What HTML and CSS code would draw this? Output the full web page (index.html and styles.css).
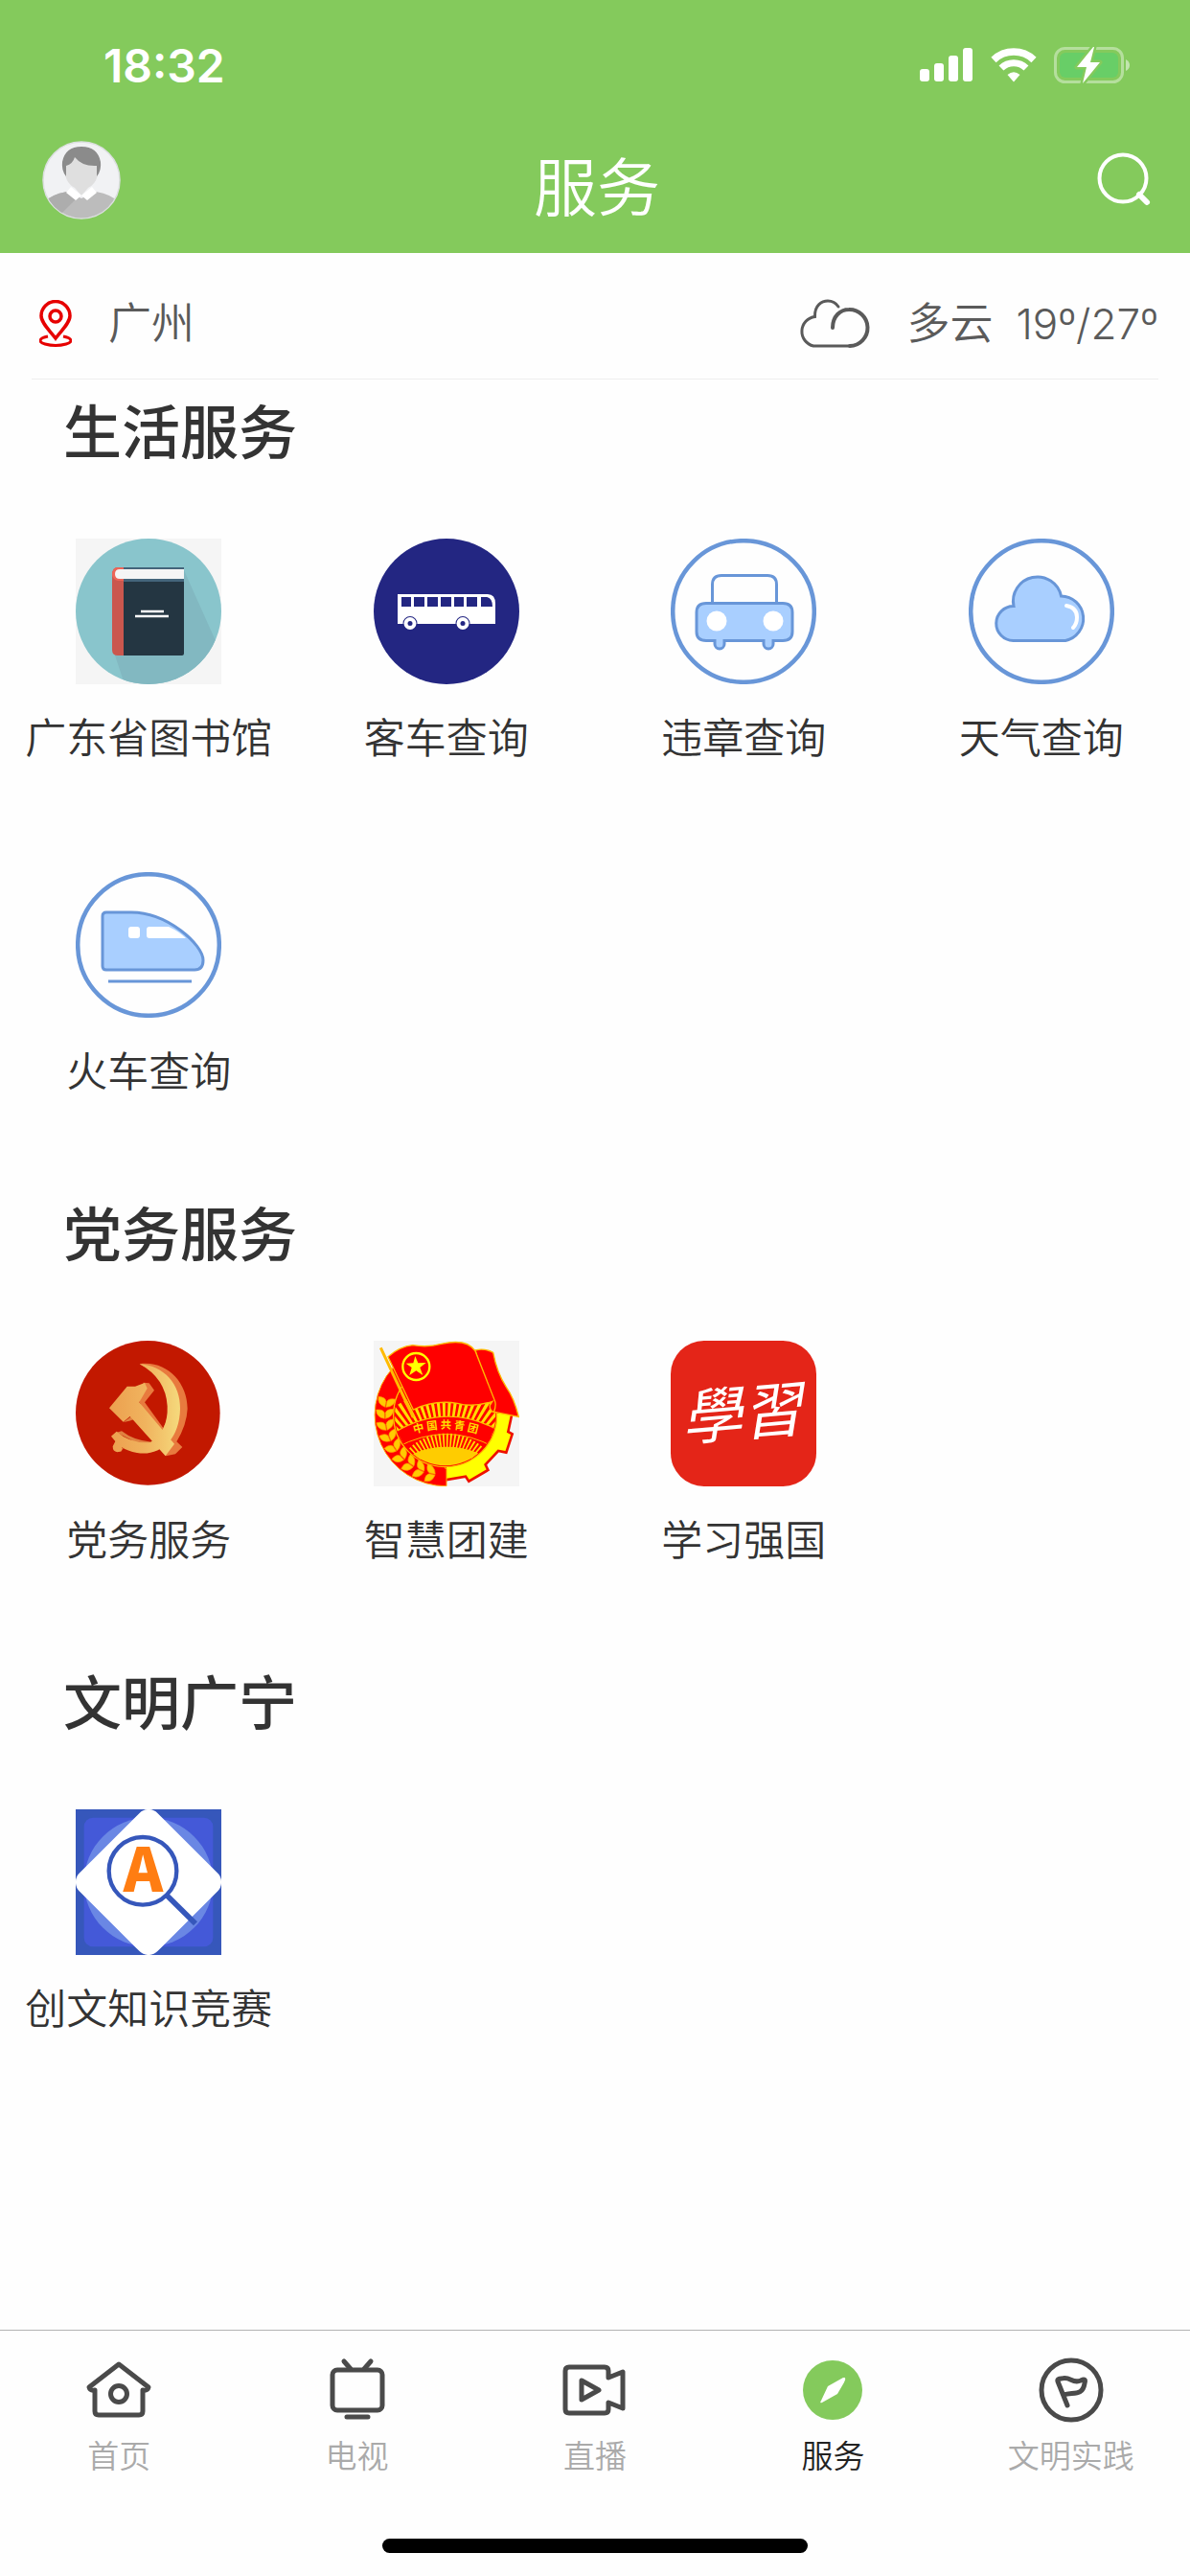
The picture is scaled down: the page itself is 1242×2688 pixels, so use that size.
FILE: index.html
```html
<!DOCTYPE html>
<html lang="zh-CN">
<head>
  <meta charset="UTF-8">
  <meta name="viewport" content="width=device-width, initial-scale=1.0">
  <title>服务</title>
  <link rel="stylesheet" href="styles.css">
</head>
<body>
  <!-- Page header -->
  <header class="header">
    <div class="status-bar">
      <div class="status-time">18:32</div>
      <div class="status-icons">
        <svg width="56" height="36" viewBox="0 0 56 36" fill="#fff">
          <rect x="0" y="22" width="10" height="13" rx="3"/>
          <rect x="15" y="16" width="10" height="19" rx="3"/>
          <rect x="30" y="8" width="10" height="27" rx="3"/>
          <rect x="45" y="0" width="10" height="35" rx="3"/>
        </svg>
        <svg width="48" height="36" viewBox="0 0 48 36" fill="none" stroke="#fff">
          <path d="M3 12.500A30.500 30.500 0 0 1 45 12.500" stroke-width="7.500"/>
          <path d="M11 21A18.500 18.500 0 0 1 37 21" stroke-width="7"/>
          <path d="M17.500 28Q24 22.500 30.500 28L24 35.500Z" fill="#fff" stroke="none"/>
        </svg>
        <svg width="80" height="40" viewBox="0 0 80 40">
          <rect x="1.500" y="2.500" width="70" height="35" rx="10" fill="none" stroke="#fff" stroke-opacity=".4" stroke-width="3"/>
          <rect x="6" y="7" width="61" height="26" rx="6" fill="#68ce67"/>
          <path d="M75 14Q79 16 79 20Q79 24 75 26Z" fill="#fff" fill-opacity=".5"/>
          <path d="M41 1L24 22H34L30 39L48 17H38L42 1Z" fill="#fff" stroke="#84ca5c" stroke-width="5" stroke-linejoin="round" paint-order="stroke"/>
        </svg>
      </div>
    </div>
    <div class="title-bar">
      <button class="avatar-button" aria-label="我的">
        <svg width="82" height="82" viewBox="0 0 82 82">
          <defs><clipPath id="avatar-clip"><circle cx="41" cy="41" r="39.500"/></clipPath></defs>
          <circle cx="41" cy="41" r="40" fill="#f1f2f4" stroke="#dcdfe0" stroke-width="1.500"/>
          <g clip-path="url(#avatar-clip)">
            <path d="M0 82V66Q8 56 26 53L41 60L56 53Q74 56 82 66V82Z" fill="#bcbcbc"/>
            <path d="M0 82V66Q8 56 26 53L36 60L14 82Z" fill="#adadad"/>
            <path d="M24 16H58V36Q55 46 48 49L41 57L34 49Q27 46 24 36Z" fill="#dfdfdf"/>
            <path d="M30 48L41 57L35 62L25 54Z M52 48L41 57L47 62L57 54Z" fill="#fff"/>
            <path d="M25 37Q20 31 21 22Q24 6 41 6Q58 6 61 22Q62 31 57 37V26Q42 27 34 17Q32 24 25 26Z" fill="#8b8b8b"/>
          </g>
        </svg>
      </button>
      <h1 class="title">服务</h1>
      <button class="search-button" aria-label="搜索">
        <svg width="58" height="58" viewBox="0 0 58 58" fill="none" stroke="#fff" stroke-linecap="round">
          <circle cx="28" cy="27" r="24.500" stroke-width="4"/>
          <path d="M45 44L53 52" stroke-width="6"/>
        </svg>
      </button>
    </div>
  </header>

  <main class="content">
    <!-- City and weather -->
    <div class="weather-bar">
      <a href="#" class="city">
        <svg width="34" height="50" viewBox="0 0 34 50" fill="none" stroke="#e60000" stroke-width="3.500">
          <path d="M17 40C11 32 2 24 2 16.500A15 15 0 0 1 32 16.500C32 24 23 32 17 40Z"/>
          <circle cx="17" cy="17" r="6"/>
          <path d="M9 38C-1 40 -1 44 6 46Q17 49 28 46C35 44 35 40 25 38" stroke-width="3"/>
        </svg>
        <span>广州</span>
      </a>
      <div class="weather">
        <svg width="76" height="52" viewBox="0 0 76 52" fill="none" stroke="#5a5a5a" stroke-width="3" stroke-linecap="round">
          <path d="M55 49H17A15.500 15.500 0 0 1 18.500 18.500C18 6 26 2 32 2Q39 2 43 8"/>
          <path d="M37 30C37 18 45 11 54 11A19 19 0 0 1 55 49" stroke-width="4"/>
        </svg>
        <span>多云</span>
        <span class="temperature">19º/27º</span>
      </div>
    </div>

    <section class="service-section">
      <h2 class="section-title">生活服务</h2>
      <div class="service-grid">
        <a href="#" class="service">
          <svg class="service-icon" viewBox="0 0 152 152">
            <defs><clipPath id="book-clip"><circle cx="76" cy="76" r="76"/></clipPath></defs>
            <rect width="152" height="152" fill="#f5f5f5"/>
            <circle cx="76" cy="76" r="76" fill="#89c5cc"/>
            <path d="M113 33L152 120V152H51L41 122H113Z" fill="#82b8c1" clip-path="url(#book-clip)"/>
            <rect x="48" y="30" width="65" height="92" rx="2" fill="#243642"/>
            <path d="M50 30H113V45H50Z" fill="#44657b"/>
            <path d="M50 30H44Q38 30 38 38V116Q38 122 44 122H50Z" fill="#ca574e"/>
            <path d="M50 30H44Q38 30 38 38Q39 43 44 44H50Z" fill="#ec6558"/>
            <path d="M113 32H46Q41 32 41 37Q41 42 46 42H113Z" fill="#f5f5f5"/>
            <path d="M68 76H92M62 81H97" stroke="#fff" stroke-width="2.500"/>
          </svg>
          <span class="service-name">广东省图书馆</span>
        </a>
        <a href="#" class="service">
          <svg class="service-icon" viewBox="0 0 152 152">
            <circle cx="76" cy="76" r="76" fill="#232682"/>
            <path d="M25 58H119Q127 58 127 68V89H25Z" fill="#fff"/>
            <path d="M29 61H39V71H29Z M42 61H53V71H42Z M56 61H67V71H56Z M70 61H81V71H70Z M84 61H94V71H84Z M97 61H108V71H97Z M112 61H118Q124 62 124 71H112Z" fill="#232682"/>
            <g fill="#fff" stroke="#232682">
              <circle cx="38" cy="88.500" r="6.500" stroke-width="2" paint-order="stroke"/>
              <circle cx="93" cy="88.500" r="6.500" stroke-width="2" paint-order="stroke"/>
            </g>
            <circle cx="38" cy="88.500" r="2.500" fill="#232682"/>
            <circle cx="93" cy="88.500" r="2.500" fill="#232682"/>
          </svg>
          <span class="service-name">客车查询</span>
        </a>
        <a href="#" class="service">
          <svg class="service-icon" viewBox="0 0 152 152" fill="none" stroke="#6896d8" stroke-width="3">
            <circle cx="76" cy="76" r="73.800" stroke-width="4.500"/>
            <path d="M43.500 67V48Q43.500 38.500 53 38.500H101Q110.500 38.500 110.500 48V67"/>
            <path d="M37 67.500H117Q127 67.500 127 77V97Q127 106.500 117 106.500H107V110A5 5 0 0 1 97 110V106.500H56V110A5 5 0 0 1 46 110V106.500H37Q27 106.500 27 97V77Q27 67.500 37 67.500Z" fill="#a9cfff"/>
            <circle cx="48" cy="86" r="10.500" fill="#fff" stroke="none"/>
            <circle cx="107" cy="86" r="10.500" fill="#fff" stroke="none"/>
          </svg>
          <span class="service-name">违章查询</span>
        </a>
        <a href="#" class="service">
          <svg class="service-icon" viewBox="0 0 152 152" fill="none" stroke="#6896d8" stroke-width="3">
            <circle cx="76" cy="76" r="73.800" stroke-width="4.500"/>
            <path d="M46.500 106.500A18 18 0 0 1 47 70.500A25 25 0 0 1 96.500 60A23.500 23.500 0 0 1 101 106.500Z" fill="#a9cfff"/>
            <path d="M102 70Q113 72 113 82Q113 89 109 93" stroke="#fff" stroke-width="4" stroke-linecap="round"/>
          </svg>
          <span class="service-name">天气查询</span>
        </a>
        <a href="#" class="service">
          <svg class="service-icon" viewBox="0 0 152 152" fill="none" stroke="#6896d8" stroke-width="3">
            <circle cx="76" cy="76" r="73.800" stroke-width="4.500"/>
            <path d="M32 42H58C96 42 133 76 133 92Q133 102 124 102H32Q28 102 28 98V46Q28 42 32 42Z" fill="#a9cfff"/>
            <rect x="55" y="57" width="12" height="12" rx="3" fill="#fff" stroke="none"/>
            <path d="M77 57H97Q108 62 115 69H77Q74 69 74 66V60Q74 57 77 57Z" fill="#fff" stroke="none"/>
            <path d="M34 114H121"/>
          </svg>
          <span class="service-name">火车查询</span>
        </a>
      </div>
    </section>

    <section class="service-section">
      <h2 class="section-title">党务服务</h2>
      <div class="service-grid">
        <a href="#" class="service">
          <svg class="service-icon" viewBox="118 57 456 456">
            <defs>
              <linearGradient id="gold" gradientUnits="userSpaceOnUse" x1="225" y1="0" x2="445" y2="0">
                <stop offset="0" stop-color="#eca04f"/>
                <stop offset=".5" stop-color="#f0b35e"/>
                <stop offset="1" stop-color="#f5d97c"/>
              </linearGradient>
            </defs>
            <circle cx="344" cy="283" r="226" fill="#c21800"/>
            <path d="M318 130C400 118 468 185 468 270Q466 320 434 373L452 390L430 412L400 418Q370 350 318 250L330 188L348 190L364 212L334 250L392 330Q415 290 407 230Q395 170 318 130Z" fill="#e87a3e"/>
            <path d="M268 312L292 294L310 300L286 308Z M236 386Q240 406 260 404L268 392Z M246 344L262 340Q300 370 356 374L340 392Z" fill="#e08040"/>
            <g fill="url(#gold)">
              <path d="M318 130C395 135 447 195 445 270C443 370 380 420 310 408Q280 402 262 390Q266 404 248 406Q234 404 234 388L242 372L229 356L246 341Q290 380 352 375Q408 340 405 262Q400 175 318 130Z"/>
              <path d="M223 268L279 200H304L334 189L342 206L317 250L427 380L399 418L288 294L267 311Z"/>
            </g>
          </svg>
          <span class="service-name">党务服务</span>
        </a>
        <a href="#" class="service">
          <svg class="service-icon" viewBox="0 0 456 456">
            <defs>
              <clipPath id="league-disc"><circle cx="224" cy="233" r="158"/></clipPath>
              <g id="wheat" fill="#fc0" stroke="#f90" stroke-width="2">
                <path d="M34 244Q8 240 8 216Q30 214 34 226Z"/>
                <path d="M37 244Q62 238 62 214Q40 214 37 226Z"/>
              </g>
              <path id="league-arc" d="M92 303Q224 248 360 303"/>
            </defs>
            <rect width="456" height="456" fill="#f5f5f5"/>
            <!-- gear -->
            <path d="M434 225L421 285L434 292L415 350L390 345L350 388L358 405L298 440L288 425L224 436V220Z" fill="#ff0" stroke="#e10" stroke-width="8"/>
            <path d="M228 455A222 222 0 0 1 60 85L224 60V400H228Z" fill="#f00" stroke="#fa0" stroke-width="3"/>
            <!-- wheat -->
            <use href="#wheat" transform="rotate(11 224 233)"/>
            <use href="#wheat"/>
            <use href="#wheat" transform="rotate(-11 224 233)"/>
            <use href="#wheat" transform="rotate(-22 224 233)"/>
            <use href="#wheat" transform="rotate(-33 224 233)"/>
            <use href="#wheat" transform="rotate(-44 224 233)"/>
            <use href="#wheat" transform="rotate(-55 224 233)"/>
            <use href="#wheat" transform="rotate(-66 224 233)"/>
            <use href="#wheat" transform="rotate(-77 224 233)"/>
            <!-- disc with rays and rising sun -->
            <circle cx="224" cy="233" r="162" fill="#f00" stroke="#fb0" stroke-width="4"/>
            <g clip-path="url(#league-disc)">
              <circle cx="224" cy="420" r="215" fill="none" stroke="#fd0" stroke-width="100" stroke-dasharray="9 8"/>
              <path d="M60 290Q224 190 390 280V400H60Z" fill="#f00" stroke="#fb0" stroke-width="4"/>
              <circle cx="228" cy="460" r="145" fill="none" stroke="#fd0" stroke-width="50" stroke-dasharray="5 6"/>
              <path d="M70 335Q229 250 380 335" fill="none" stroke="#fb0" stroke-width="3"/>
              <ellipse cx="228" cy="390" rx="130" ry="58" fill="#fc0"/>
            </g>
            <text class="league-text"><textPath href="#league-arc" startOffset="50%" text-anchor="middle">中 国 共 青 团</textPath></text>
            <!-- flag -->
            <path d="M22 22L124 240" stroke="#fb0" stroke-width="9"/>
            <path d="M318 30Q345 22 374 37Q386 100 415 145Q440 180 454 238L372 222Z" fill="#f00" stroke="#fb0" stroke-width="4"/>
            <path d="M45 50Q82 18 122 14Q170 22 212 10C265 -2 300 5 318 32L380 190Q384 205 376 224Q362 218 364 202L372 190Q310 210 262 196Q190 184 124 216Z" fill="#f00" stroke="#fb0" stroke-width="4"/>
            <circle cx="133" cy="81" r="42" fill="none" stroke="#ff0" stroke-width="7"/>
            <path d="M130 48L139 70L164 69L145 84L154 108L133 94L112 108L119 84L101 71L124 70Z" fill="#ff0"/>
          </svg>
          <span class="service-name">智慧团建</span>
        </a>
        <a href="#" class="service">
          <svg class="service-icon" viewBox="0 0 456 456">
            <rect width="456" height="456" rx="104" fill="#e42518"/>
            <text class="study-text" x="222" y="296" text-anchor="middle" transform="rotate(-5 228 228)">學習</text>
          </svg>
          <span class="service-name">学习强国</span>
        </a>
      </div>
    </section>

    <section class="service-section">
      <h2 class="section-title">文明广宁</h2>
      <div class="service-grid">
        <a href="#" class="service">
          <svg class="service-icon" viewBox="0 0 456 456">
            <rect width="456" height="456" fill="#3657bb"/>
            <rect x="26" y="26" width="404" height="404" rx="28" fill="#4459d8"/>
            <circle cx="228" cy="228" r="202" fill="#6a87e4"/>
            <rect x="55" y="55" width="346" height="346" rx="40" transform="rotate(45 228 228)" fill="#fff"/>
            <g fill="none" stroke="#3657bb">
              <circle cx="210" cy="193" r="106" stroke-width="13"/>
              <path d="M286 270L375 358" stroke-width="17"/>
            </g>
            <text class="quiz-text" x="211" y="259" text-anchor="middle">A</text>
          </svg>
          <span class="service-name">创文知识竞赛</span>
        </a>
      </div>
    </section>
  </main>

  <!-- Bottom tabs -->
  <footer class="footer">
    <nav class="tabs">
      <a href="#" class="tab">
        <svg class="tab-icon" viewBox="0 0 70 70">
          <path d="M4 32L35 8L66 32Q65 36 60 35V57Q60 61 56 61H14Q10 61 10 57V35Q5 36 4 32Z"/>
          <circle cx="35" cy="39" r="8.500"/>
        </svg>
        <span>首页</span>
      </a>
      <a href="#" class="tab">
        <svg class="tab-icon" viewBox="0 0 70 70">
          <rect x="9" y="14" width="52" height="42" rx="5"/>
          <path d="M21 5L28 13M49 5L42 13M24 63H46"/>
        </svg>
        <span>电视</span>
      </a>
      <a href="#" class="tab">
        <svg class="tab-icon" viewBox="0 0 70 70">
          <path d="M8 11H45Q49 11 49 15V22L64 16V54L49 48V55Q49 59 45 59H8Q4 59 4 55V15Q4 11 8 11Z"/>
          <path d="M21 25V45L39 35Z"/>
        </svg>
        <span>直播</span>
      </a>
      <a href="#" class="tab active" aria-current="page">
        <svg class="tab-icon" viewBox="0 0 70 70">
          <circle class="compass" cx="35" cy="35" r="31"/>
          <path class="needle" d="M48 22Q49 24 47 27L40 39L24 48Q21 49 23 46L30 31L46 22Z"/>
        </svg>
        <span>服务</span>
      </a>
      <a href="#" class="tab">
        <svg class="tab-icon" viewBox="0 0 70 70">
          <circle cx="35" cy="35" r="31"/>
          <path d="M31 51L21 26Q20 23 25 23C34 20 36 29 45 25Q51 22 49 28C47 41 38 37 27 40"/>
        </svg>
        <span>文明实践</span>
      </a>
    </nav>
    <div class="home-indicator"></div>
  </footer>
</body>
</html>
```
FILE: styles.css
```css
* {
  box-sizing: border-box;
}

body {
  display: flex;
  flex-direction: column;
  min-height: 100vh;
  margin: 0;
  font-family: Inter, "Noto Sans CJK SC", sans-serif;
  font-weight: 350;
  color: #333;
  background-color: #fefefe;
}

a {
  color: inherit;
  text-decoration: none;
}

button {
  display: flex;
  padding: 0;
  border: none;
  background: none;
  cursor: pointer;
}

svg {
  display: block;
  flex-shrink: 0;
}

/* Header styles */
.header {
  color: #fff;
  background-color: #84ca5c;
}

.status-bar {
  display: flex;
  justify-content: space-between;
  align-items: center;
  height: 136px;
  padding: 0 62px 0 108px;
}

.status-time {
  font-size: 48px;
  font-weight: 600;
}

.status-icons {
  display: flex;
  align-items: center;
  gap: 18px;
}

.title-bar {
  display: flex;
  justify-content: space-between;
  align-items: center;
  height: 104px;
  margin-bottom: 24px;
  padding: 0 40px 0 44px;
}

.title {
  margin: 0;
  padding-top: 16px;
  font-size: 66px;
  font-weight: 350;
  line-height: 80px;
}

.avatar-button,
.search-button {
  flex: 1;
}

.search-button {
  justify-content: flex-end;
}

/* City and weather */
.content {
  flex: 1;
}

.weather-bar {
  display: flex;
  justify-content: space-between;
  align-items: center;
  height: 132px;
  margin: 0 33px;
  padding: 16px 0 0 8px;
  border-bottom: 1px solid #eee;
  font-size: 45px;
  line-height: 60px;
  color: #5a5a5a;
}

.city,
.weather {
  display: flex;
  align-items: center;
}

.city {
  gap: 38px;
}

.weather {
  gap: 24px;
}

.weather svg {
  margin-right: 14px;
}

.temperature {
  font-size: 44px;
}

/* Service lists */
.service-section + .service-section {
  margin-top: 29px;
}

.section-title {
  margin: 0;
  padding: 0 66px;
  font-size: 61px;
  font-weight: 500;
  line-height: 112px;
}

.service-grid {
  display: grid;
  grid-template-columns: repeat(4, 1fr);
}

.service {
  display: flex;
  flex-direction: column;
  align-items: center;
  gap: 26px;
  padding: 54px 0 56px;
}

.service-icon {
  width: 152px;
  height: 152px;
}

.service-name {
  font-size: 43px;
  line-height: 60px;
  white-space: nowrap;
}

.league-text {
  font-family: "Noto Sans CJK SC", sans-serif;
  font-size: 34px;
  font-weight: 700;
  fill: #fd0;
}

.study-text {
  font-family: "Noto Sans CJK TC", sans-serif;
  font-size: 190px;
  font-style: italic;
  font-weight: 400;
  fill: #fff;
}

.quiz-text {
  font-family: "Noto Sans CJK SC", sans-serif;
  font-size: 188px;
  font-weight: 900;
  fill: #ff7d12;
}

/* Bottom tabs */
.footer {
  padding-bottom: 24px;
  border-top: 1px solid #b2b2b2;
}

.tabs {
  display: grid;
  grid-template-columns: repeat(5, 1fr);
  margin-bottom: 66px;
  padding-top: 27px;
}

.tab {
  display: flex;
  flex-direction: column;
  align-items: center;
  gap: 14px;
  font-size: 33px;
  line-height: 40px;
  color: #aaa;
}

.tab.active {
  color: #222;
}

.tab-icon {
  width: 70px;
  height: 70px;
  fill: none;
  stroke: #4a4a4a;
  stroke-width: 5;
  stroke-linecap: round;
  stroke-linejoin: round;
}

.compass {
  fill: #84ca5c;
  stroke: none;
}

.needle {
  fill: #fff;
  stroke: none;
}

.home-indicator {
  width: 444px;
  height: 15px;
  margin: 0 auto;
  border-radius: 8px;
  background-color: #000;
}
```
